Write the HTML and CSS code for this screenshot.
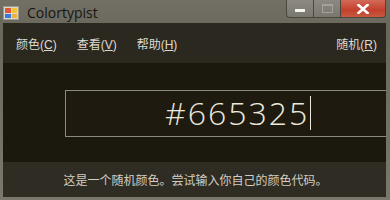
FILE: index.html
```html
<!DOCTYPE html>
<html>
<head>
<meta charset="utf-8">
<link rel="stylesheet" href="styles.css">
</head>
<body>
<div class="window">
  <div class="titlebar">
    <svg class="appicon" width="16" height="14" viewBox="0 0 16 14">
      <rect x="0.5" y="0.5" width="15" height="13" fill="#d8d8d0" stroke="#9a9a90"/>
      <rect x="2" y="2" width="6" height="5" fill="#e0583a"/>
      <rect x="9" y="2" width="5" height="5" fill="#f2c33a"/>
      <rect x="2" y="8" width="6" height="4" fill="#3a7ad8"/>
      <rect x="9" y="8" width="5" height="4" fill="#f0b040"/>
    </svg>
    <span class="title">Colortypist</span>
    <div class="controls">
      <div class="btn min"><span class="minbar"></span></div>
      <div class="btn max"><span class="maxbox"></span></div>
      <div class="btn close"><svg width="12" height="10" viewBox="0 0 12 10"><path d="M1.5 1 L10.5 9 M10.5 1 L1.5 9" stroke="#fff" stroke-width="2.6" stroke-linecap="square"/></svg></div>
    </div>
  </div>
  <div class="client">
    <div class="menubar">
      <span class="item">颜色(<u>C</u>)</span>
      <span class="item">查看(<u>V</u>)</span>
      <span class="item">帮助(<u>H</u>)</span>
      <span class="spacer"></span>
      <span class="item">随机(<u>R</u>)</span>
    </div>
    <div class="main">
      <div class="box"><span class="code">#665325</span><span class="caret"></span></div>
    </div>
    <div class="status">这是一个随机颜色。尝试输入你自己的颜色代码。</div>
  </div>
</div>
</body>
</html>
```
FILE: styles.css
```css
html, body {
  margin: 0;
  padding: 0;
}
body {
  width: 390px;
  height: 200px;
  overflow: hidden;
  background: #76746a;
}
.window {
  width: 390px;
  height: 200px;
  display: flex;
  flex-direction: column;
  background: linear-gradient(#727064, #6a685c 30px, #7a786c);
}
.titlebar {
  height: 23px;
  display: flex;
  align-items: center;
  flex-shrink: 0;
}
.appicon {
  margin-left: 3px;
  margin-top: 2px;
}
.title {
  margin-left: 8px;
  font-family: "Open Sans", "Liberation Sans", sans-serif;
  font-size: 14px;
  color: #161612;
  margin-top: 1px;
}
.controls {
  margin-left: auto;
  margin-right: 4px;
  align-self: flex-start;
  display: flex;
  height: 19px;
}
.btn {
  height: 18px;
  border: 1px solid #4a483e;
  border-top: none;
  display: flex;
  align-items: center;
  justify-content: center;
  box-sizing: border-box;
}
.min {
  width: 27px;
  border-bottom-left-radius: 4px;
  background: linear-gradient(#8c8a80, #7a786e);
  border-right: none;
}
.max {
  width: 27px;
  background: linear-gradient(#8c8a80, #7a786e);
  border-right: none;
}
.close {
  width: 46px;
  border-bottom-right-radius: 4px;
  background: linear-gradient(#d46a58, #c2402c 60%, #c85a40);
}
.minbar {
  width: 10px;
  height: 3px;
  background: #f4f4f0;
  margin-top: 4px;
}
.maxbox {
  width: 9px;
  height: 6px;
  border: 1px solid #a4a298;
  border-top-width: 2px;
}
.client {
  flex: 1;
  margin: 0 4px 3px 3px;
  display: flex;
  flex-direction: column;
  font-family: "Noto Sans CJK SC", sans-serif;
}
.menubar {
  height: 40px;
  background: #2b2820;
  display: flex;
  align-items: center;
  padding: 0 9px 0 13px;
  color: #dedad0;
  font-size: 12px;
  flex-shrink: 0;
}
.item {
  margin-right: 20px;
  font-family: "Liberation Sans", "Noto Sans CJK SC", sans-serif;
}
.item:last-child {
  margin-right: 0;
}
.spacer {
  flex: 1;
}
.main {
  flex: 1;
  background: #1b180e;
  display: flex;
  align-items: center;
  padding-left: 62px;
}
.box {
  flex: 1;
  height: 47px;
  box-sizing: border-box;
  border: 1px solid #8c8a7c;
  border-right: none;
  background: #1e1a10;
  display: flex;
  align-items: center;
  padding-left: 99px;
  margin-top: 1px;
}
.code {
  font-family: "Open Sans", sans-serif;
  font-weight: 300;
  font-size: 32px;
  letter-spacing: 2px;
  color: #ece8dc;
  line-height: 1;
}
.caret {
  width: 1px;
  height: 34px;
  background: #ece8dc;
  margin-left: 1px;
}
.status {
  height: 35px;
  background: #2f2c24;
  color: #d2cec2;
  font-size: 12px;
  display: flex;
  align-items: center;
  justify-content: center;
  padding-left: 2px;
  flex-shrink: 0;
}
```
